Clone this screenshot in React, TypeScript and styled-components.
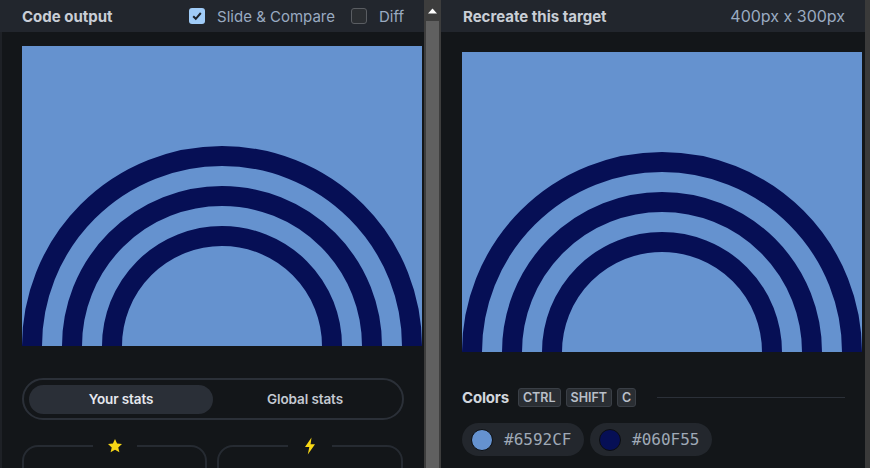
import styled, { createGlobalStyle } from "styled-components";

const GlobalStyle = createGlobalStyle`
  html, body {
    margin: 0;
    padding: 0;
    background: #131619;
    font-family: Inter, "Noto Sans", sans-serif;
    overflow: hidden;
  }
`;

const Layout = styled.div`
  display: flex;
  width: 870px;
  height: 468px;
  overflow: hidden;
  background: #131619;
`;

const Panel = styled.div<{ $width: number }>`
  width: ${({ $width }) => $width}px;
  flex-shrink: 0;
  display: flex;
  flex-direction: column;
  height: 100%;
`;

const Header = styled.div`
  height: 32px;
  background: #22262d;
  display: flex;
  align-items: center;
  padding: 0 20px 0 22px;
  gap: 12px;
  flex-shrink: 0;
`;

const Title = styled.span`
  font-size: 15px;
  font-weight: 700;
  color: #c9ced6;
  flex: 1;
`;

const Muted = styled.span<{ $size?: number }>`
  font-size: ${({ $size }) => $size ?? 15}px;
  color: #9aabc1;
`;

const Check = styled.span<{ $on?: boolean }>`
  width: 16px;
  height: 16px;
  box-sizing: border-box;
  border-radius: 3px;
  display: flex;
  align-items: center;
  justify-content: center;
  background: ${({ $on }) => ($on ? "#a0ccf8" : "#2b2e32")};
  border: ${({ $on }) => ($on ? "none" : "1px solid #5a5d62")};
  margin-left: 4px;
`;

const Body = styled.div<{ $pad: string }>`
  flex: 1;
  padding: ${({ $pad }) => $pad};
  display: flex;
  flex-direction: column;
`;

const LeftEdge = styled.div`
  display: flex;
  flex: 1;
  border-left: 2px solid #1e2126;
`;

const Canvas = styled.svg`
  width: 400px;
  height: 300px;
  display: block;
  flex-shrink: 0;
`;

const Toggle = styled.div`
  margin-top: 32px;
  width: 382px;
  height: 42px;
  box-sizing: border-box;
  border: 2px solid #2b3038;
  border-radius: 21px;
  display: flex;
  align-items: center;
  padding: 0 5px;
`;

const ToggleItem = styled.div<{ $active?: boolean }>`
  flex: 1;
  height: 29px;
  border-radius: 15px;
  display: flex;
  align-items: center;
  justify-content: center;
  font-size: 13.5px;
  font-weight: 600;
  letter-spacing: -0.1px;
  color: ${({ $active }) => ($active ? "#e6e9ee" : "#c4c9d1")};
  background: ${({ $active }) => ($active ? "#2a2f37" : "transparent")};
`;

const Cards = styled.div`
  margin-top: 25px;
  display: grid;
  grid-template-columns: 185px 186px;
  gap: 10px;
`;

const Card = styled.div`
  position: relative;
  height: 60px;
  border: 2px solid #262b32;
  border-radius: 16px;
`;

const CardIcon = styled.span`
  position: absolute;
  top: -10px;
  left: 50%;
  transform: translateX(-50%);
  width: 44px;
  height: 18px;
  background: #131619;
  display: flex;
  align-items: center;
  justify-content: center;
`;

const Scrollbar = styled.div`
  width: 17px;
  flex-shrink: 0;
  background: #3d3d3d;
  display: flex;
  flex-direction: column;
  align-items: center;
`;

const ScrollArrow = styled.div`
  height: 21px;
  display: flex;
  align-items: center;
  justify-content: center;
`;

const ScrollThumb = styled.div`
  flex: 1;
  width: 13px;
  background: #606060;
`;

const RightBar = styled.div`
  width: 5px;
  flex-shrink: 0;
  background: #3a3a3a;
`;

const ColorsRow = styled.div`
  margin-top: 36px;
  display: flex;
  align-items: center;
  gap: 5px;
`;

const SectionLabel = styled.span`
  font-size: 15px;
  font-weight: 700;
  color: #d2d6dd;
  letter-spacing: -0.2px;
  margin-right: 4px;
`;

const Key = styled.span`
  height: 19px;
  box-sizing: border-box;
  padding: 0 4px;
  border: 1px solid #3a3f46;
  border-radius: 3px;
  background: #2a2e33;
  color: #b9bfc8;
  font-size: 12.5px;
  font-weight: 600;
  display: flex;
  align-items: center;
`;

const Rule = styled.div`
  flex: 1;
  height: 1px;
  background: #2b3038;
  margin-left: 16px;
  margin-right: 20px;
`;

const Swatches = styled.div`
  margin-top: 16px;
  display: flex;
  gap: 6px;
`;

const Swatch = styled.div`
  height: 33px;
  width: 122px;
  box-sizing: border-box;
  border-radius: 17px;
  background: #23272d;
  display: flex;
  align-items: center;
  padding-left: 9px;
  gap: 11px;
  font-family: "DejaVu Sans Mono", "Liberation Mono", monospace;
  font-size: 16px;
  color: #9fa9b6;
`;

const Dot = styled.span<{ $color: string }>`
  width: 22px;
  height: 22px;
  flex-shrink: 0;
  box-sizing: border-box;
  border-radius: 50%;
  border: 1px solid #0c0e10;
  background: ${({ $color }) => $color};
`;

function Rainbow() {
  return (
    <Canvas viewBox="0 0 400 300">
      <rect width="400" height="300" fill="#6592CF" />
      {[190, 150, 110].map((r) => (
        <circle key={r} cx="200" cy="300" r={r} fill="none" stroke="#060F55" strokeWidth="20" />
      ))}
    </Canvas>
  );
}

function CheckMark() {
  return (
    <svg width="12" height="12" viewBox="0 0 12 12">
      <path d="M2.2 6.2 L4.8 8.8 L9.8 3" fill="none" stroke="#1d232b" strokeWidth="2" />
    </svg>
  );
}

export default function App() {
  return (
    <>
      <GlobalStyle />
      <Layout>
        <Panel $width={424}>
          <Header>
            <Title>Code output</Title>
            <Check $on>
              <CheckMark />
            </Check>
            <Muted>Slide &amp; Compare</Muted>
            <Check />
            <Muted>Diff</Muted>
          </Header>
          <LeftEdge>
            <Body $pad="14px 0 0 20px">
              <Rainbow />
              <Toggle>
                <ToggleItem $active>Your stats</ToggleItem>
                <ToggleItem>Global stats</ToggleItem>
              </Toggle>
              <Cards>
                <Card>
                  <CardIcon>
                    <svg width="16" height="16" viewBox="0 0 24 24">
                      <path
                        d="M12 1.5l3.1 6.9 7.4.7-5.6 5 1.7 7.4L12 17.7l-6.6 3.8 1.7-7.4-5.6-5 7.4-.7z"
                        fill="#f7d716"
                      />
                    </svg>
                  </CardIcon>
                </Card>
                <Card>
                  <CardIcon>
                    <svg width="14" height="18" viewBox="0 0 14 18">
                      <path d="M8.5 0.5 L2 10 L6.3 10 L4.8 17.5 L12 7.2 L7.6 7.2 Z" fill="#f7d716" />
                    </svg>
                  </CardIcon>
                </Card>
              </Cards>
            </Body>
          </LeftEdge>
        </Panel>
        <Scrollbar>
          <ScrollArrow>
            <svg width="9" height="6" viewBox="0 0 9 6">
              <path d="M0 5.5 L4.5 0.5 L9 5.5 Z" fill="#ffffff" />
            </svg>
          </ScrollArrow>
          <ScrollThumb />
        </Scrollbar>
        <Panel $width={424}>
          <Header>
            <Title>Recreate this target</Title>
            <Muted $size={16}>400px x 300px</Muted>
          </Header>
          <Body $pad="20px 0 0 21px">
            <Rainbow />
            <ColorsRow>
              <SectionLabel>Colors</SectionLabel>
              <Key>CTRL</Key>
              <Key>SHIFT</Key>
              <Key>C</Key>
              <Rule />
            </ColorsRow>
            <Swatches>
              <Swatch>
                <Dot $color="#6592CF" />
                #6592CF
              </Swatch>
              <Swatch>
                <Dot $color="#060F55" />
                #060F55
              </Swatch>
            </Swatches>
          </Body>
        </Panel>
        <RightBar />
      </Layout>
    </>
  );
}
